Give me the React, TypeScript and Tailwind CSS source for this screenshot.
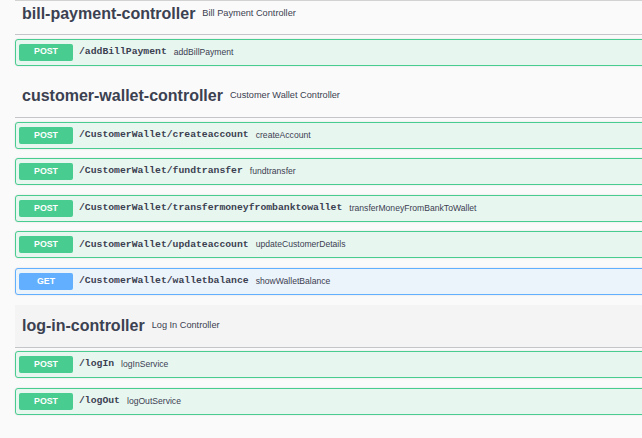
import React from "react";

type Method = "POST" | "GET";

interface Op {
    method: Method;
    path: string;
    summary: string;
}

interface Tag {
    name: string;
    description: string;
    ops: Op[];
    hovered?: boolean;
}

const tags: Tag[] = [
    {
        name: "bill-payment-controller",
        description: "Bill Payment Controller",
        ops: [{ method: "POST", path: "/addBillPayment", summary: "addBillPayment" }],
    },
    {
        name: "customer-wallet-controller",
        description: "Customer Wallet Controller",
        ops: [
            { method: "POST", path: "/CustomerWallet/createaccount", summary: "createAccount" },
            { method: "POST", path: "/CustomerWallet/fundtransfer", summary: "fundtransfer" },
            { method: "POST", path: "/CustomerWallet/transfermoneyfrombanktowallet", summary: "transferMoneyFromBankToWallet" },
            { method: "POST", path: "/CustomerWallet/updateaccount", summary: "updateCustomerDetails" },
            { method: "GET", path: "/CustomerWallet/walletbalance", summary: "showWalletBalance" },
        ],
    },
    {
        name: "log-in-controller",
        description: "Log In Controller",
        hovered: true,
        ops: [
            { method: "POST", path: "/logIn", summary: "logInService" },
            { method: "POST", path: "/logOut", summary: "logOutService" },
        ],
    },
];

function OpBlock({ op }: { op: Op }) {
    const isGet = op.method === "GET";
    return (
        <div
            className={`h-[27px] mb-[9.6px] flex items-center px-[3px] rounded-[3px] border shadow-[0_0_2px_rgba(0,0,0,0.12)] ${
                isGet ? "border-[#61affe] bg-[#ebf3fb]" : "border-[#49cc90] bg-[#e8f6f0]"
            }`}
        >
            <span
                className={`w-[54px] h-[17px] flex items-center justify-center rounded-[2px] text-white font-bold text-[8.8px] ${
                    isGet ? "bg-[#61affe]" : "bg-[#49cc90]"
                }`}
            >
                {op.method}
            </span>
            <span className="ml-[6px] font-['Liberation_Mono',monospace] font-semibold text-[9.75px] text-[#3b4151]">
                {op.path}
            </span>
            <span className="ml-[7px] text-[8.6px] text-[#3b4151]">{op.summary}</span>
        </div>
    );
}

function TagSection({ tag, first }: { tag: Tag; first: boolean }) {
    return (
        <div>
            <div
                className={`flex items-center pl-[7px] border-b border-[#c4c5c9] ${
                    first ? "h-[35px] pb-[8px] border-t border-t-[#d2d2d2]" : "h-[43px]"
                } ${tag.hovered ? "bg-[#f4f4f4]" : ""}`}
            >
                <h3 className="text-[16px] font-bold text-[#3b4151]">{tag.name}</h3>
                <span className="ml-[7px] text-[9.2px] text-[#3b4151]">{tag.description}</span>
            </div>
            <div className="pt-[3.5px]">
                {tag.ops.map((op) => (
                    <OpBlock key={op.path} op={op} />
                ))}
            </div>
        </div>
    );
}

export default function App() {
    return (
        <div className="w-[642px] h-[438px] overflow-hidden bg-[#fafafa] font-['Liberation_Sans',Arial,sans-serif]">
            <div className="ml-[15px] w-[720px]">
                {tags.map((tag, i) => (
                    <TagSection key={tag.name} tag={tag} first={i === 0} />
                ))}
            </div>
        </div>
    );
}
